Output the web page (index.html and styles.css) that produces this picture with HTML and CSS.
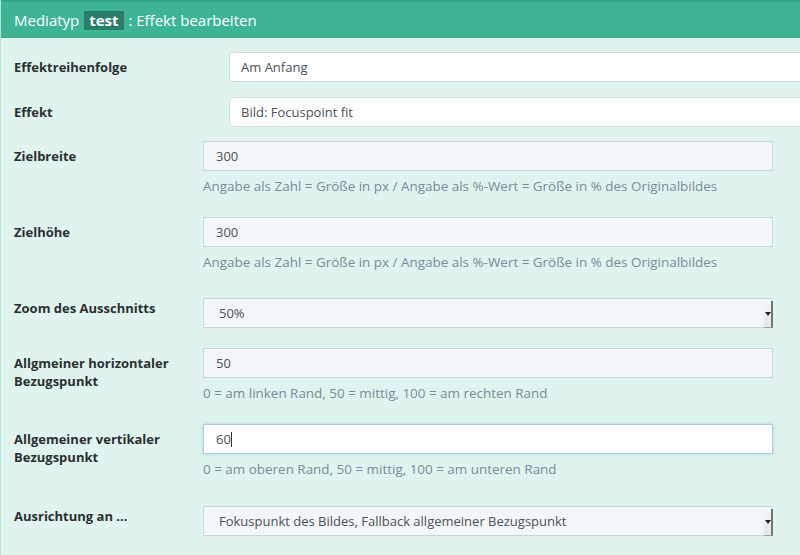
FILE: index.html
```html
<!DOCTYPE html>
<html lang="de">
<head>
<meta charset="utf-8">
<link rel="stylesheet" href="styles.css">
</head>
<body>
<div class="panel">
  <div class="panel-heading">Mediatyp <span class="badge">test</span> : Effekt bearbeiten</div>
  <div class="panel-body">
    <div class="row row-wide">
      <label class="lbl lbl-center">Effektreihenfolge</label>
      <div class="ctl"><div class="field field-white">Am Anfang</div></div>
    </div>
    <div class="row row-wide">
      <label class="lbl lbl-center">Effekt</label>
      <div class="ctl"><div class="field field-white">Bild: Focuspoint fit</div></div>
    </div>
    <div class="row gap-14">
      <label class="lbl lbl-center-1">Zielbreite</label>
      <div class="ctl">
        <div class="field">300</div>
        <p class="help">Angabe als Zahl = Größe in px / Angabe als %-Wert = Größe in % des Originalbildes</p>
      </div>
    </div>
    <div class="row gap-21">
      <label class="lbl lbl-center-1">Zielhöhe</label>
      <div class="ctl">
        <div class="field">300</div>
        <p class="help">Angabe als Zahl = Größe in px / Angabe als %-Wert = Größe in % des Originalbildes</p>
      </div>
    </div>
    <div class="row gap-26">
      <label class="lbl lbl-select">Zoom des Ausschnitts</label>
      <div class="ctl"><div class="field select">50%<span class="arrow"></span></div></div>
    </div>
    <div class="row gap-20">
      <label class="lbl">Allgmeiner horizontaler Bezugspunkt</label>
      <div class="ctl">
        <div class="field">50</div>
        <p class="help">0 = am linken Rand, 50 = mittig, 100 = am rechten Rand</p>
      </div>
    </div>
    <div class="row gap-21">
      <label class="lbl">Allgemeiner vertikaler Bezugspunkt</label>
      <div class="ctl">
        <div class="field focus">60<span class="caret"></span></div>
        <p class="help">0 = am oberen Rand, 50 = mittig, 100 = am unteren Rand</p>
      </div>
    </div>
    <div class="row gap-27">
      <label class="lbl lbl-select">Ausrichtung an ...</label>
      <div class="ctl"><div class="field select">Fokuspunkt des Bildes, Fallback allgemeiner Bezugspunkt<span class="arrow"></span></div></div>
    </div>
  </div>
</div>
</body>
</html>
```
FILE: styles.css
```css
* { box-sizing: border-box; }
html, body {
  margin: 0;
  padding: 0;
  width: 800px;
  height: 555px;
  overflow: hidden;
  background: #dff4ee;
  font-family: "Open Sans", "DejaVu Sans", sans-serif;
}
.panel {
  height: 555px;
  border-left: 1px solid #b5e2d4;
}
.panel-heading {
  height: 38px;
  background: #3db594;
  border-top: 2px solid #2ea583;
  border-bottom: 1px solid #36ab8b;
  color: #fff;
  font-size: 15px;
  padding: 8px 0 0 13px;
  line-height: 20px;
  white-space: nowrap;
}
.badge {
  display: inline-block;
  background: #2a7d67;
  font-weight: bold;
  padding: 0 5px;
  line-height: 19px;
  margin: 0 1px;
}
.panel-body {
  padding-top: 13px;
  border-top: 1px solid #e9f8f3;
}
.row {
  display: grid;
  grid-template-columns: 202px 570px;
  margin-top: 15px;
}
.row:first-child { margin-top: 0; }
.row-wide { grid-template-columns: 228px 600px; }
.gap-14 { margin-top: 14px; }
.gap-20 { margin-top: 20px; }
.gap-21 { margin-top: 21px; }
.gap-26 { margin-top: 26px; }
.gap-27 { margin-top: 27px; }
.lbl {
  font-size: 13px;
  font-weight: bold;
  color: #2b2f31;
  line-height: 18px;
  padding: 6px 0 0 13px;
  max-width: 190px;
}
.lbl-center { padding-top: 6px; }
.lbl-center-1 { padding-top: 6px; }
.lbl-select { padding-top: 1px; }
.field {
  position: relative;
  height: 30px;
  border: 1px solid #cdd5d9;
  background: #f3f6f9;
  color: #4a5157;
  font-size: 13px;
  line-height: 28px;
  padding: 0 12px;
  white-space: nowrap;
}
.field-white {
  background: #fff;
  border-color: #d6dcdf;
  border-radius: 4px;
  padding-left: 11px;
}
.focus {
  background: #fff;
  border-color: #a9cbe3;
  box-shadow: 0 0 3px rgba(110, 170, 215, 0.5);
}
.caret {
  display: inline-block;
  width: 1px;
  height: 15px;
  background: #333;
  vertical-align: -3px;
}
.select { padding-left: 15px; }
.arrow {
  position: absolute;
  right: -1px;
  top: 2px;
  width: 9px;
  height: 27px;
  border-right: 2px solid #6f7477;
  border-bottom: 1px solid #9ca2a5;
  background: linear-gradient(#f5f5f5, #e6e6e6);
}
.arrow::after {
  content: "";
  position: absolute;
  left: 1px;
  top: 11px;
  border-left: 3px solid transparent;
  border-right: 3px solid transparent;
  border-top: 4px solid #222;
}
.help {
  margin: 5px 0 0;
  font-size: 13.45px;
  line-height: 20px;
  color: #7a8b9a;
  white-space: nowrap;
}
```
